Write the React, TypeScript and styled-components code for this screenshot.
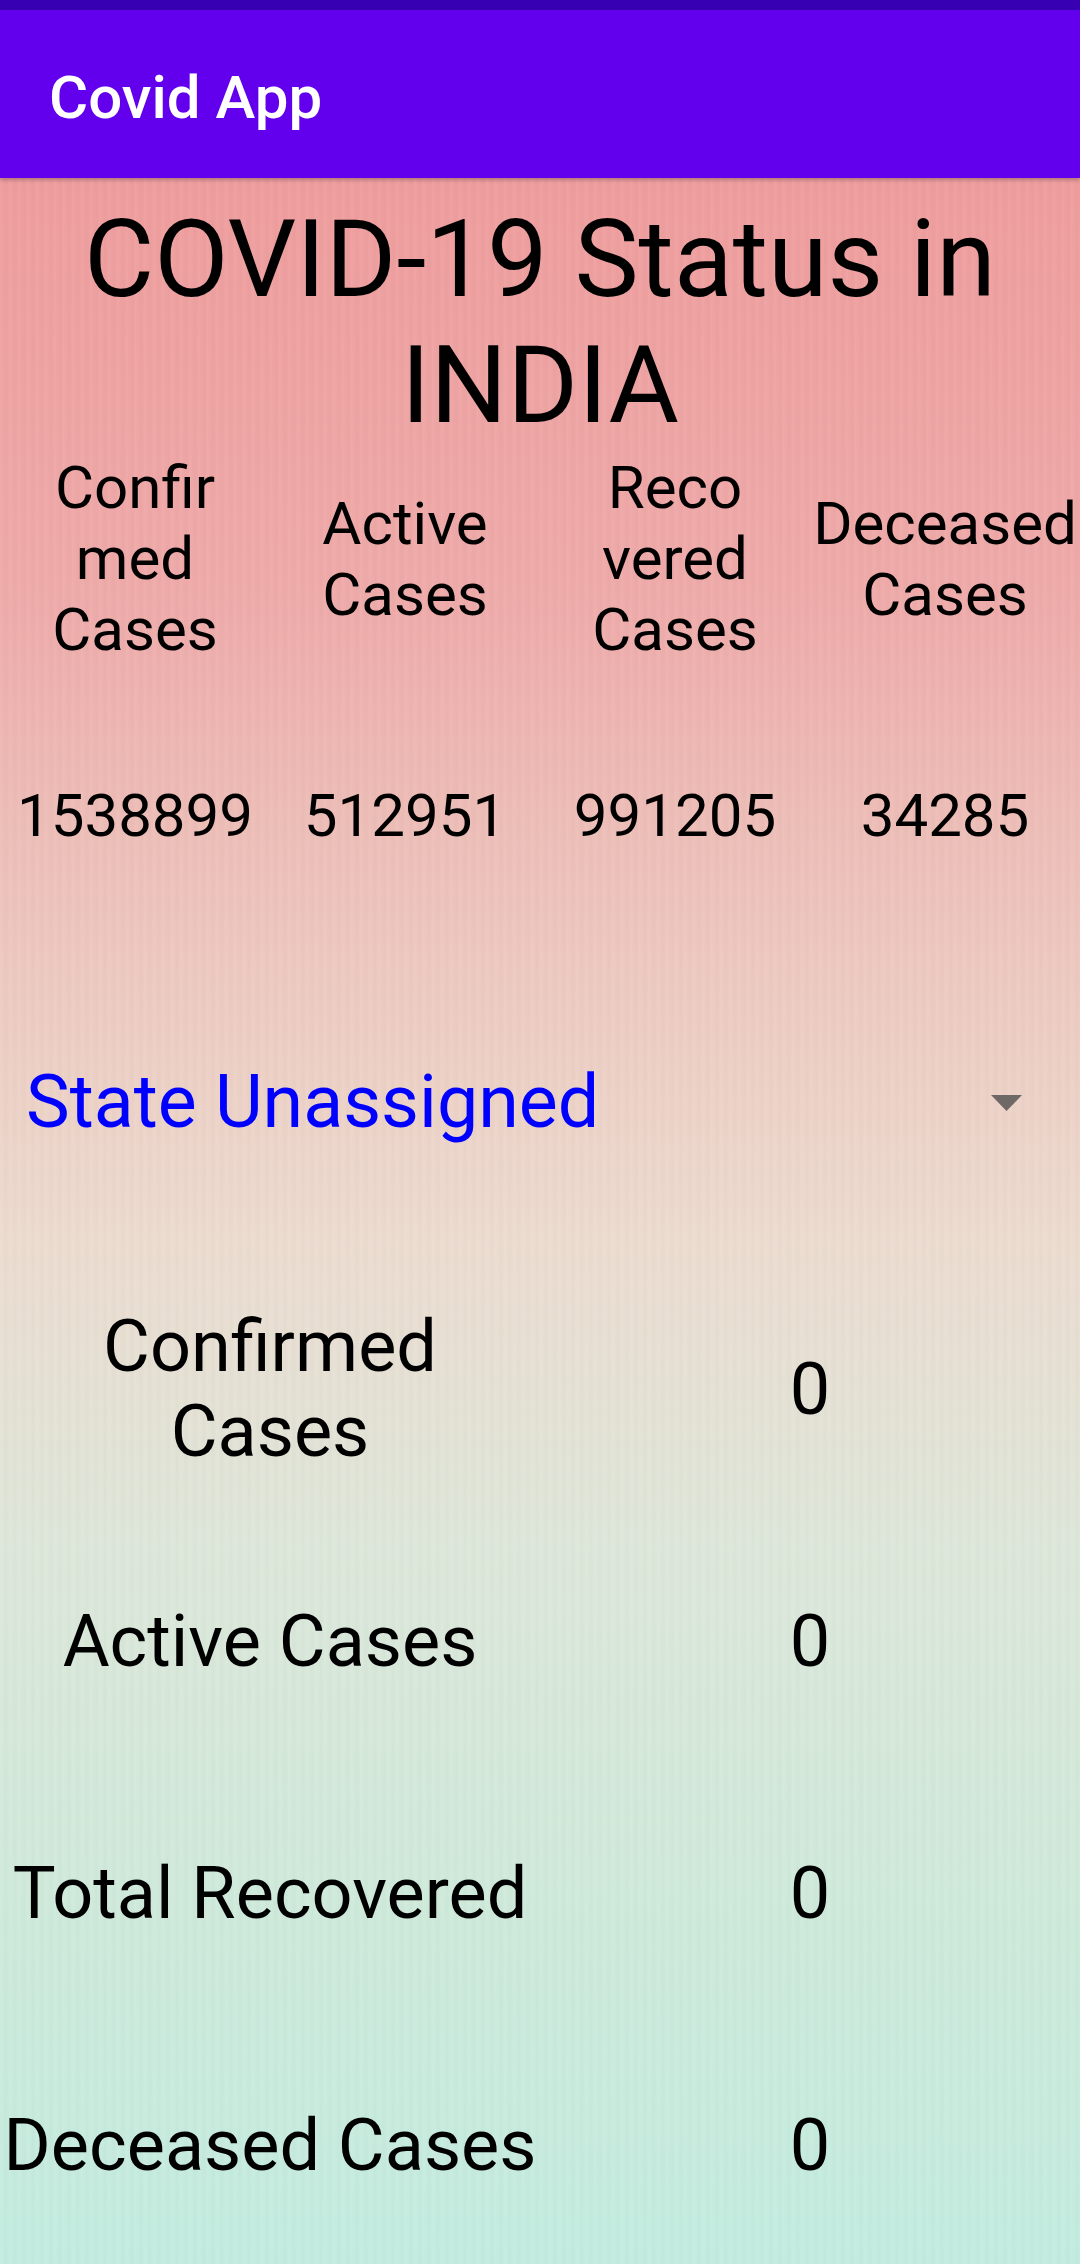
import React from "react";
import styled, { createGlobalStyle } from "styled-components";

const GlobalStyle = createGlobalStyle`
  html, body {
    margin: 0;
    padding: 0;
  }
  body {
    font-family: Roboto, "Noto Sans", "Liberation Sans", sans-serif;
    width: 1080px;
    height: 2264px;
    overflow: hidden;
  }
  #root {
    height: 100%;
  }
`;

const Screen = styled.div`
  display: flex;
  flex-direction: column;
  width: 1080px;
  height: 2264px;
  overflow: hidden;
`;

const StatusBar = styled.div`
  height: 10px;
  background: #3700b3;
  flex-shrink: 0;
`;

const AppBar = styled.header`
  height: 168px;
  flex-shrink: 0;
  background: #6200ee;
  display: flex;
  align-items: center;
  padding: 6px 0 0 49px;
  box-sizing: border-box;
  box-shadow: 0 2px 4px rgba(0, 0, 0, 0.25);
  position: relative;
  z-index: 1;
`;

const AppTitle = styled.h1`
  margin: 0;
  color: #ffffff;
  font-size: 60px;
  font-weight: 500;
  line-height: normal;
`;

const Content = styled.main`
  flex: 1 0 auto;
  display: flex;
  flex-direction: column;
  color: #000;
  background:
    repeating-linear-gradient(
      90deg,
      rgba(255, 255, 255, 0.05) 0px,
      rgba(255, 255, 255, 0) 3px,
      rgba(0, 0, 0, 0.015) 6px,
      rgba(255, 255, 255, 0) 9px
    ),
    linear-gradient(
      180deg,
      #ef9d9d 0px,
      #eeabaa 422px,
      #edc8bf 772px,
      #ecdcd0 1072px,
      #dde7da 1372px,
      #cdeadb 1772px,
      #c3ece0 2090px
    );
`;

const Heading = styled.h2`
  margin: 18px 0 0;
  font-size: 108px;
  font-weight: 400;
  line-height: normal;
  text-align: center;
`;

const StatGrid = styled.div<{ $gap: number }>`
  display: grid;
  grid-template-columns: repeat(4, 1fr);
  align-items: center;
  margin-top: ${(p) => p.$gap}px;
  font-size: 60px;
  line-height: normal;
`;

const Cell = styled.div`
  text-align: center;
  white-space: nowrap;
`;

const Line = styled.span`
  display: block;
`;

const Spinner = styled.div`
  display: flex;
  align-items: center;
  justify-content: space-between;
  margin-top: 208px;
  padding: 0 58px 0 26px;
`;

const SpinnerText = styled.span`
  color: #0000ff;
  font-size: 73.5px;
  line-height: normal;
`;

const Arrow = styled.svg`
  width: 31px;
  height: 16px;
  margin-top: 2px;
`;

const StateTable = styled.div`
  margin-top: 118px;
  display: grid;
  grid-template-rows: repeat(4, 252px);
`;

const StateRow = styled.div`
  display: grid;
  grid-template-columns: 1fr 1fr;
  align-items: center;
  font-size: 72px;
  line-height: normal;
`;

const RowLabel = styled.div`
  text-align: center;
`;

const RowValue = styled.div`
  text-align: center;
`;

const headers: string[][] = [
  ["Confir", "med", "Cases"],
  ["Active", "Cases"],
  ["Reco", "vered", "Cases"],
  ["Deceased", "Cases"],
];

const totals = ["1538899", "512951", "991205", "34285"];

const stateRows: { label: string[]; value: string }[] = [
  { label: ["Confirmed", "Cases"], value: "0" },
  { label: ["Active Cases"], value: "0" },
  { label: ["Total Recovered"], value: "0" },
  { label: ["Deceased Cases"], value: "0" },
];

export default function App() {
  return (
    <>
      <GlobalStyle />
      <Screen>
        <StatusBar />
        <AppBar>
          <AppTitle>Covid App</AppTitle>
        </AppBar>
        <Content>
          <Heading>
            COVID-19 Status in
            <br />
            INDIA
          </Heading>
          <StatGrid $gap={4}>
            {headers.map((h, i) => (
              <Cell key={i}>
                {h.map((l, j) => (
                  <Line key={j}>{l}</Line>
                ))}
              </Cell>
            ))}
          </StatGrid>
          <StatGrid $gap={115}>
            {totals.map((t, i) => (
              <Cell key={i}>{t}</Cell>
            ))}
          </StatGrid>
          <Spinner>
            <SpinnerText>State Unassigned</SpinnerText>
            <Arrow viewBox="0 0 31 16">
              <polygon points="0,0 31,0 15.5,16" fill="#6e6866" />
            </Arrow>
          </Spinner>
          <StateTable>
            {stateRows.map((r, i) => (
              <StateRow key={i}>
                <RowLabel>
                  {r.label.map((l, j) => (
                    <Line key={j}>{l}</Line>
                  ))}
                </RowLabel>
                <RowValue>{r.value}</RowValue>
              </StateRow>
            ))}
          </StateTable>
        </Content>
      </Screen>
    </>
  );
}
